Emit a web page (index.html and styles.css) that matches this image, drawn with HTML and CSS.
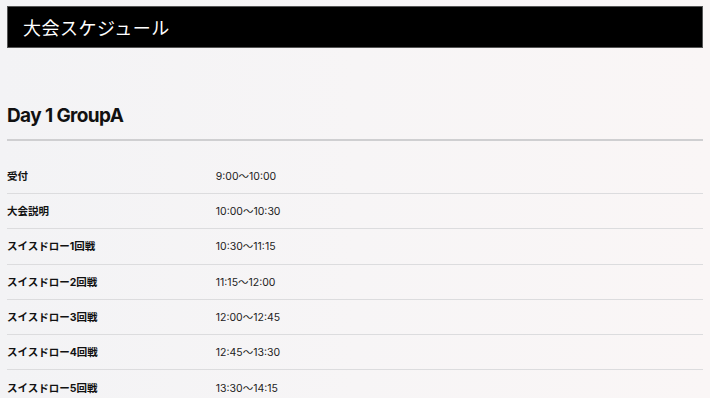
FILE: index.html
```html
<!DOCTYPE html>
<html lang="ja">
<head>
  <meta charset="UTF-8" />
  <meta name="viewport" content="width=device-width, initial-scale=1.0" />
  <title>大会スケジュール</title>
  <link rel="stylesheet" href="styles.css">
</head>
<body>
  <header class="site-header">
    <h1>大会スケジュール</h1>
  </header>

  <section class="day">
    <h2>Day 1 GroupA</h2>
    <div class="schedule">
      <div class="row"><span class="item">受付</span><span class="time">9:00〜10:00</span></div>
      <div class="row"><span class="item">大会説明</span><span class="time">10:00〜10:30</span></div>
      <div class="row"><span class="item">スイスドロー1回戦</span><span class="time">10:30〜11:15</span></div>
      <div class="row"><span class="item">スイスドロー2回戦</span><span class="time">11:15〜12:00</span></div>
      <div class="row"><span class="item">スイスドロー3回戦</span><span class="time">12:00〜12:45</span></div>
      <div class="row"><span class="item">スイスドロー4回戦</span><span class="time">12:45〜13:30</span></div>
      <div class="row"><span class="item">スイスドロー5回戦</span><span class="time">13:30〜14:15</span></div>
    </div>
  </section>
</body>
</html>
```

FILE: styles.css
```css
body {
  margin: 0;
  padding: 6px 7px 40px;
  font-family: Inter, "Noto Sans CJK JP", sans-serif;
  color: #111;
  background: linear-gradient(90deg, #f3f3f5 0%, #f7f5f6 50%, #faf6f6 100%);
  min-height: 100vh;
  box-sizing: border-box;
}
.site-header {
  background: #000;
  border: 1px solid #555;
  height: 42px;
  box-sizing: border-box;
  display: flex;
  align-items: center;
  padding: 0 15px;
}
.site-header h1 {
  margin: 0;
  color: #fff;
  font-family: "Noto Sans CJK JP", sans-serif;
  font-weight: 400;
  font-size: 18px;
  letter-spacing: 0.5px;
}
.day h2 {
  margin: 56px 0 0;
  padding-bottom: 11px;
  font-size: 19px;
  font-weight: 700;
  letter-spacing: -0.6px;
  line-height: 24px;
  border-bottom: 2px solid #cfcfd1;
}
.schedule {
  margin-top: 18px;
}
.row {
  display: grid;
  grid-template-columns: 30% 1fr;
  align-items: center;
  height: 35.2px;
  padding-top: 2px;
  box-sizing: border-box;
  font-size: 10.5px;
  line-height: 16px;
  border-bottom: 1px solid #dcdcde;
}
.row:last-child {
  border-bottom: none;
}
.item {
  font-weight: 700;
}
.time {
  font-weight: 400;
  color: #222;
}
```
